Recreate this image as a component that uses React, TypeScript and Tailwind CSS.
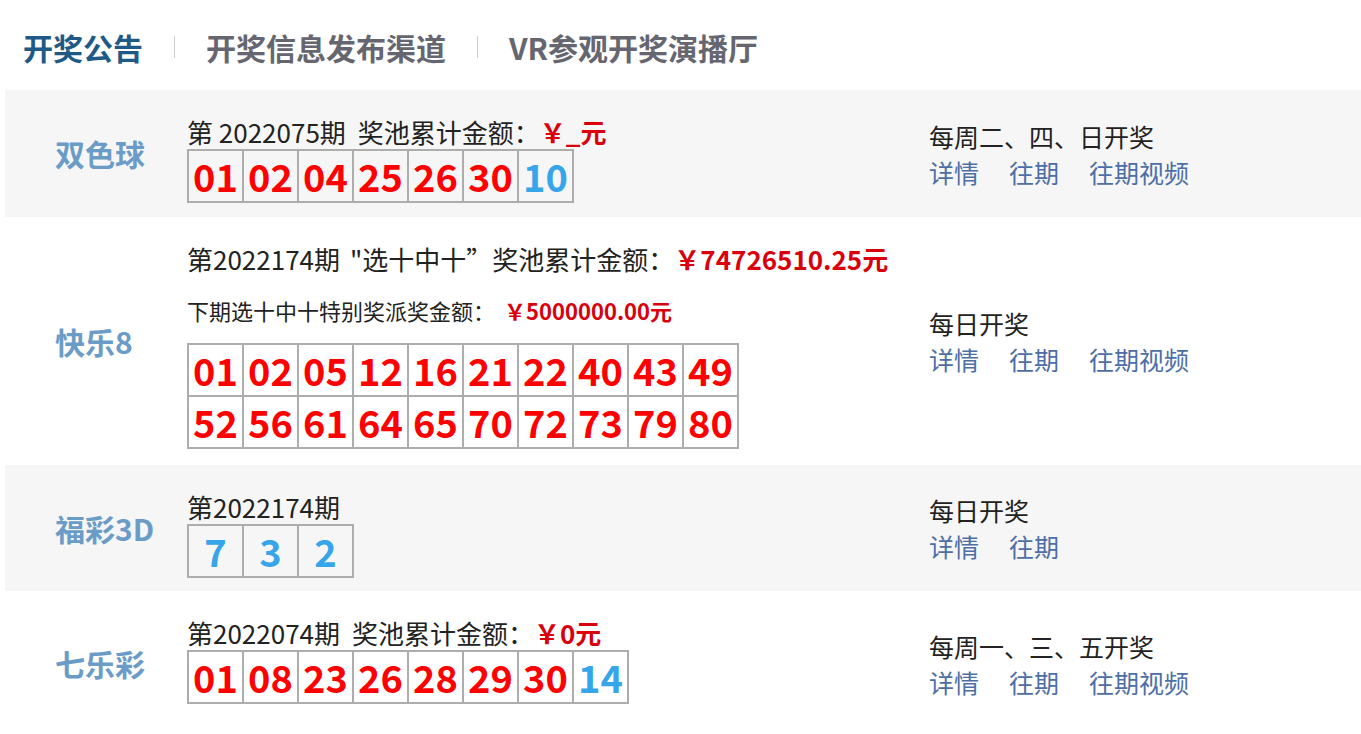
import * as React from "react";

type Ball = { n: string; blue?: boolean };

const FONT = { fontFamily: '"Noto Sans CJK SC", "Noto Sans", sans-serif' };

const TABS = ["开奖公告", "开奖信息发布渠道", "VR参观开奖演播厅"];

function Balls({ balls, cols }: { balls: Ball[]; cols: number }) {
  const lines: Ball[][] = [];
  for (let i = 0; i < balls.length; i += cols) lines.push(balls.slice(i, i + cols));
  return (
    <div className="inline-flex flex-col border-l-2 border-t-2 border-[#adadad]">
      {lines.map((line, i) => (
        <div key={i} className="flex">
          {line.map((b, j) => (
            <div
              key={j}
              className={
                "w-[55px] h-[52px] border-r-2 border-b-2 border-[#adadad] flex items-center justify-center text-[38px] font-bold leading-none " +
                (b.blue ? "text-[#36a5ea]" : "text-[#ff0000]")
              }
            >
              {b.n}
            </div>
          ))}
        </div>
      ))}
    </div>
  );
}

const red = (list: string[]): Ball[] => list.map((n) => ({ n }));

function Money({ children, small }: { children: React.ReactNode; small?: boolean }) {
  return (
    <span className={(small ? "text-[22px]" : "text-[26px]") + " font-bold text-[#d9000c]"}>
      {children}
    </span>
  );
}

function Row({
  name,
  bg,
  className,
  schedule,
  links,
  children,
}: {
  name: string;
  bg: string;
  className: string;
  schedule: string;
  links: string[];
  children: React.ReactNode;
}) {
  return (
    <div className={"grid grid-cols-[182px_742px_1fr] " + bg}>
      <div className="flex items-center pl-[50px] text-[30px] font-bold text-[#6b9cc8]">{name}</div>
      <div className={className}>{children}</div>
      <div className="flex flex-col justify-center text-[25px] leading-[36px]">
        <div className="text-[#222]">{schedule}</div>
        <div className="flex gap-[30px] text-[#4d6fa6]">
          {links.map((l) => (
            <a key={l} href="#" className="hover:underline">
              {l}
            </a>
          ))}
        </div>
      </div>
    </div>
  );
}

export default function App() {
  return (
    <div className="bg-white w-[1361px] min-h-[734px] overflow-hidden text-[#222]" style={FONT}>
      {/* Tabs */}
      <div className="h-[90px] flex items-center pl-[23px] pt-[3px]">
        {TABS.map((t, i) => (
          <React.Fragment key={t}>
            {i > 0 && <span className="mx-[31px] w-px h-[22px] bg-[#cfcfcf]" />}
            <span
              className={
                "text-[30px] font-bold leading-none " + (i === 0 ? "text-[#1f5a86]" : "text-[#666670]")
              }
            >
              {t}
            </span>
          </React.Fragment>
        ))}
      </div>

      <div className="ml-[5px]">
        {/* 双色球 */}
        <Row
          name="双色球"
          bg="bg-[#f6f6f6]"
          className="pt-[25px] pb-[14px]"
          schedule="每周二、四、日开奖"
          links={["详情", "往期", "往期视频"]}
        >
          <div className="text-[26px] leading-[34px]">
            第 2022075期<span className="ml-[12px]">奖池累计金额：</span>
            <Money>￥_元</Money>
          </div>
          <Balls cols={7} balls={[...red(["01", "02", "04", "25", "26", "30"]), { n: "10", blue: true }]} />
        </Row>

        {/* 快乐8 */}
        <Row
          name="快乐8"
          bg="bg-white"
          className="pt-[25px] pb-[16px]"
          schedule="每日开奖"
          links={["详情", "往期", "往期视频"]}
        >
          <div className="text-[26px] leading-[34px]">
            第2022174期<span className="ml-[10px]">"选十中十”</span>
            <span>奖池累计金额：</span>
            <Money>￥74726510.25元</Money>
          </div>
          <div className="mt-[17px] text-[22px] leading-[34px]">
            下期选十中十特别奖派奖金额：<span className="ml-[9px]" />
            <Money small>￥5000000.00元</Money>
          </div>
          <div className="mt-[16px]">
            <Balls
              cols={10}
              balls={red([
                "01", "02", "05", "12", "16", "21", "22", "40", "43", "49",
                "52", "56", "61", "64", "65", "70", "72", "73", "79", "80",
              ])}
            />
          </div>
        </Row>

        {/* 福彩3D */}
        <Row
          name="福彩3D"
          bg="bg-[#f6f6f6]"
          className="pt-[25px] pb-[13px]"
          schedule="每日开奖"
          links={["详情", "往期"]}
        >
          <div className="text-[26px] leading-[34px]">第2022174期</div>
          <Balls cols={3} balls={[{ n: "7", blue: true }, { n: "3", blue: true }, { n: "2", blue: true }]} />
        </Row>

        {/* 七乐彩 */}
        <Row
          name="七乐彩"
          bg="bg-white"
          className="pt-[25px] pb-[32px]"
          schedule="每周一、三、五开奖"
          links={["详情", "往期", "往期视频"]}
        >
          <div className="text-[26px] leading-[34px]">
            第2022074期<span className="ml-[12px]">奖池累计金额：</span>
            <Money>￥0元</Money>
          </div>
          <Balls cols={8} balls={[...red(["01", "08", "23", "26", "28", "29", "30"]), { n: "14", blue: true }]} />
        </Row>
      </div>
    </div>
  );
}
